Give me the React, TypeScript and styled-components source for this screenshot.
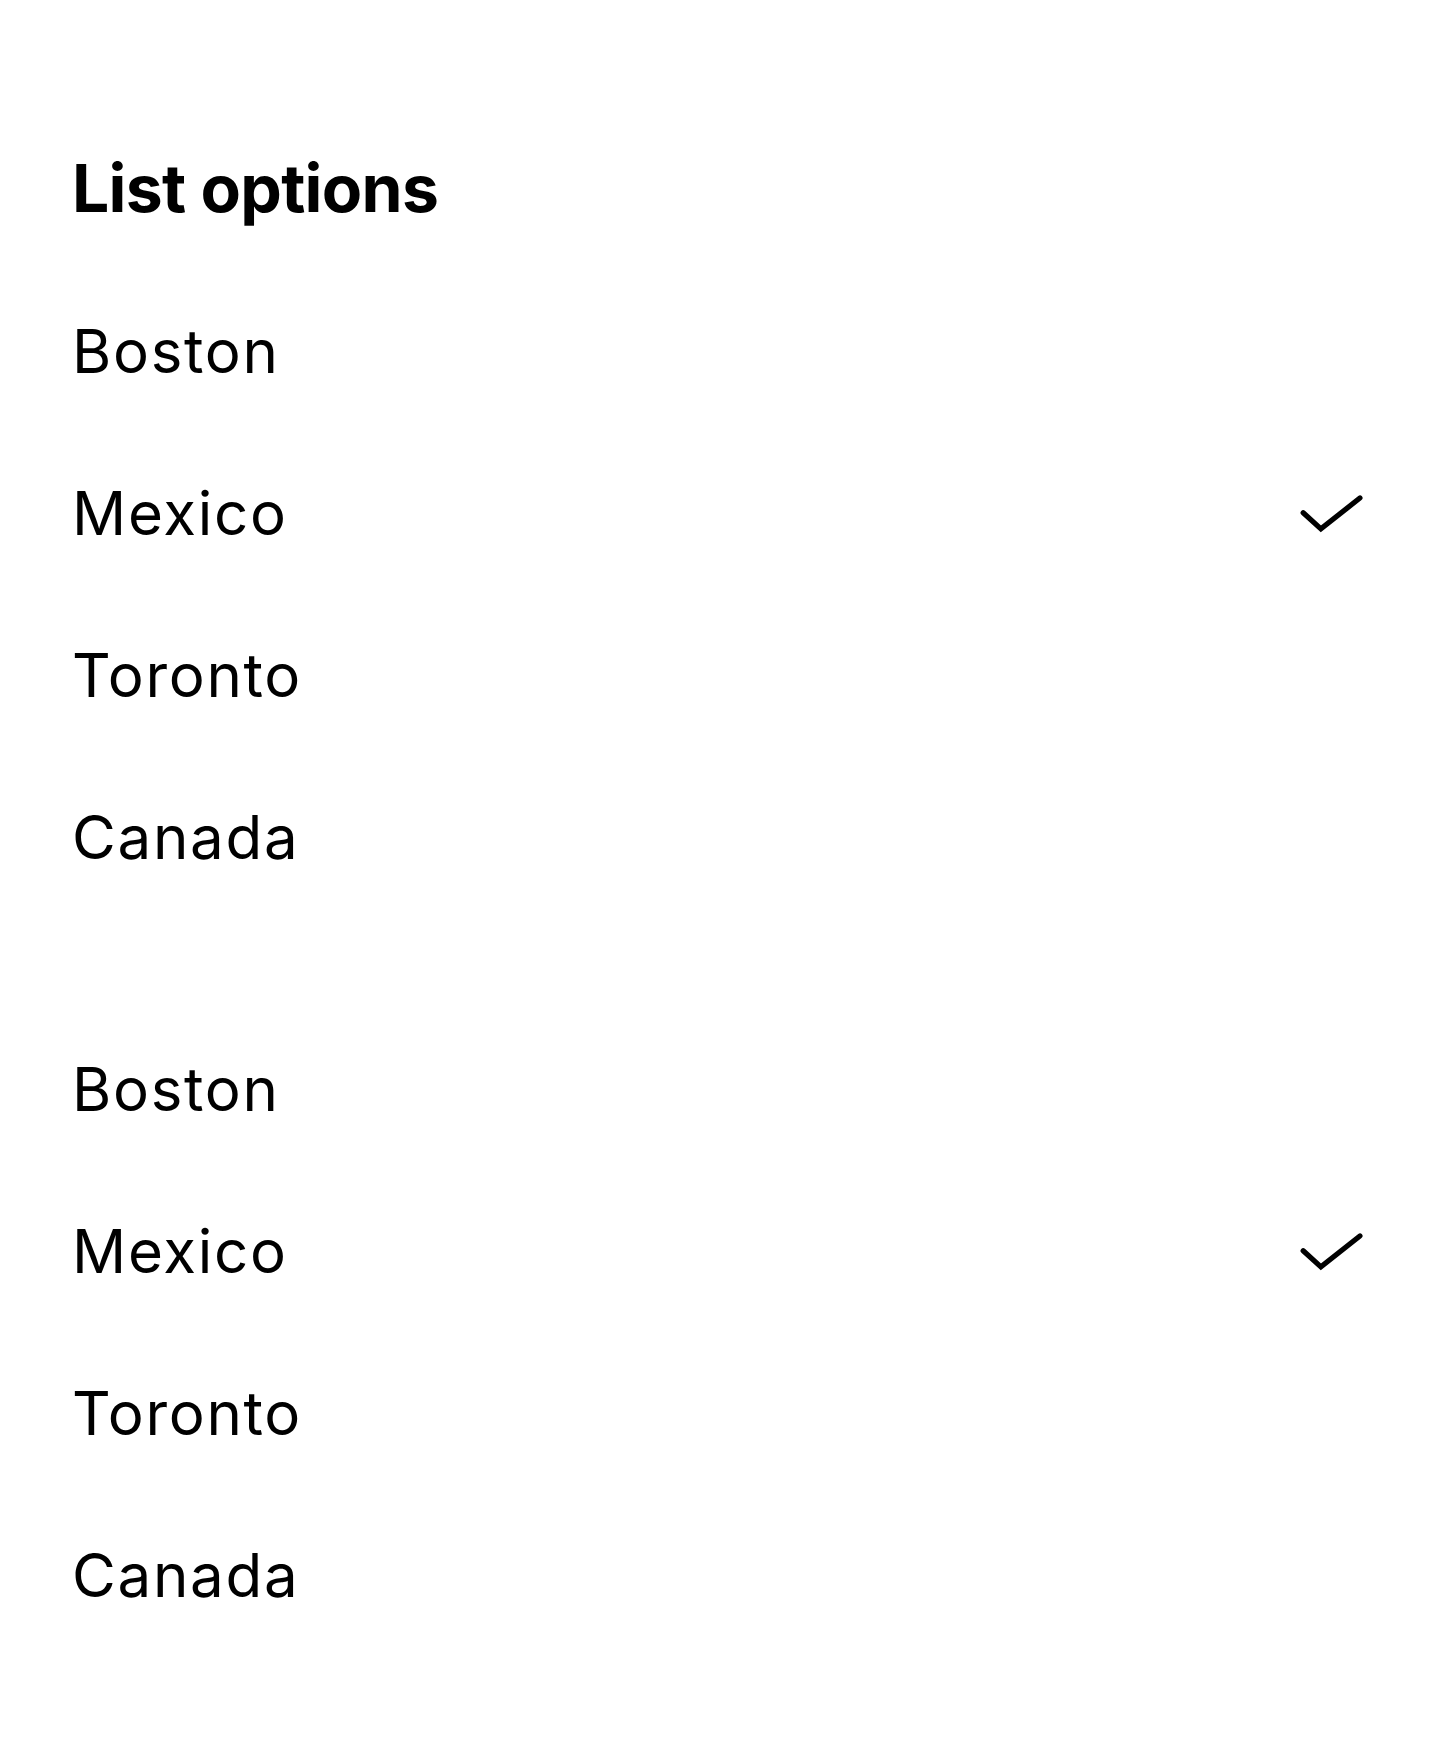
import React from "react";
import styled, { createGlobalStyle } from "styled-components";

const GlobalStyle = createGlobalStyle`
  html, body {
    margin: 0;
    padding: 0;
    background: #ffffff;
  }
  body {
    font-family: Inter, "Noto Sans", "Liberation Sans", sans-serif;
    color: #000000;
  }
`;

const Page = styled.main`
  width: 1440px;
  min-height: 1764px;
  box-sizing: border-box;
  padding: 148px 72px 0 72px;
  background: #ffffff;
`;

const Title = styled.h1`
  margin: 0 0 42px 0;
  font-family: Inter, "Noto Sans", sans-serif;
  font-size: 66px;
  font-weight: 700;
  line-height: normal;
  letter-spacing: -0.7px;
  color: #000000;
`;

const Group = styled.ul<{ $gap?: number }>`
  list-style: none;
  margin: 0;
  padding: 0;
  margin-top: ${(p) => p.$gap ?? 0}px;
`;

const Row = styled.li`
  height: 162px;
  display: flex;
  align-items: center;
  justify-content: space-between;
`;

const Label = styled.span`
  font-family: Inter, "Noto Sans", sans-serif;
  font-size: 60px;
  font-weight: 400;
  line-height: normal;
  color: #000000;
  letter-spacing: 1.7px;
`;

const CheckBox = styled.span`
  width: 72px;
  height: 72px;
  display: flex;
  align-items: center;
  justify-content: center;
  svg {
    display: block;
  }
`;

const CheckIcon = () => (
  <svg width="72" height="72" viewBox="0 0 24 24" fill="none">
    <polyline
      points="2.4,11.9 8.3,17.3 21.3,7"
      stroke="#000"
      strokeWidth="1.75"
      strokeLinecap="round"
      strokeLinejoin="miter"
    />
  </svg>
);

const cities = ["Boston", "Mexico", "Toronto", "Canada"];

const OptionList = ({ selected, gap }: { selected: string; gap?: number }) => (
  <Group $gap={gap}>
    {cities.map((c) => (
      <Row key={c}>
        <Label>{c}</Label>
        {c === selected && (
          <CheckBox>
            <CheckIcon />
          </CheckBox>
        )}
      </Row>
    ))}
  </Group>
);

export default function App() {
  return (
    <>
      <GlobalStyle />
      <Page>
        <Title>List options</Title>
        <OptionList selected="Mexico" />
        <OptionList selected="Mexico" gap={90} />
      </Page>
    </>
  );
}
